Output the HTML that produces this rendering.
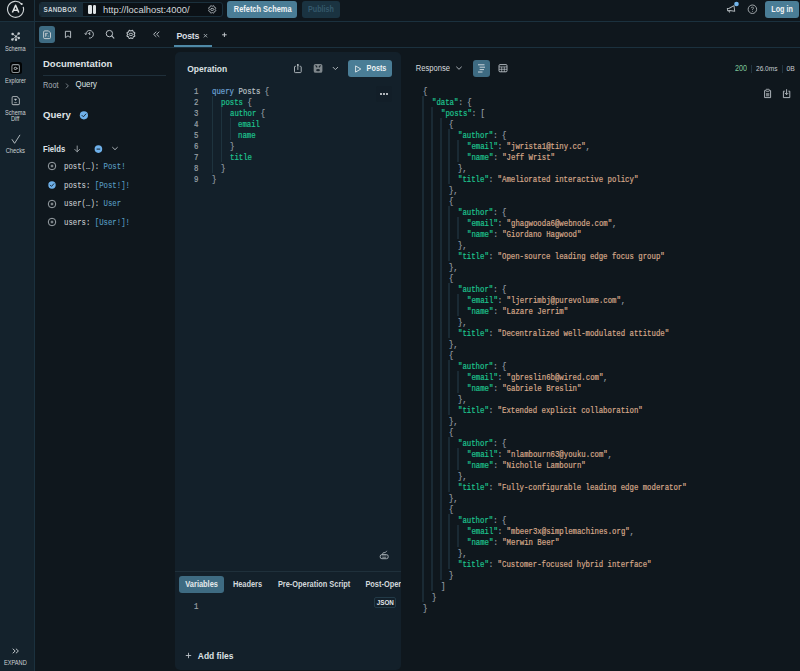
<!DOCTYPE html>
<html><head><meta charset="utf-8"><title>Apollo Sandbox</title>
<style>html,body{margin:0;padding:0;width:800px;height:671px;overflow:hidden;background:#0f171d;font-family:"Liberation Sans",sans-serif}</style>
</head><body>
<div style="position:absolute;left:0px;top:0px;width:800px;height:671px;background:#0f171d;"></div><div style="position:absolute;left:0px;top:22px;width:34px;height:649px;background:#14222c;"></div><div style="position:absolute;left:34px;top:0px;width:1px;height:671px;background:#1b313e;"></div><div style="position:absolute;left:0px;top:21px;width:800px;height:1px;background:#1b313e;"></div><div style="position:absolute;left:35px;top:47px;width:765px;height:1px;background:#1b313e;"></div><svg style="position:absolute;left:6px;top:0px;" width="20" height="20" viewBox="0 0 20 20" fill="none"><path d="M17.28 7.23 A8 8 0 1 1 15.59 4.05" stroke="#cdd2d5" stroke-width="1.15" stroke-linecap="round"/><circle cx="15.7" cy="3.95" r="1.05" fill="#d5d9dc"/><path d="M6.4 12.5 L9.6 5.3 L12.8 12.5 M7.6 10.2 L11.6 10.2" stroke="#e0e3e5" stroke-width="1.55" stroke-linejoin="round"/></svg><div style="position:absolute;left:38.8px;top:2px;width:182.5px;height:12.8px;border:1px solid #1b303c;border-radius:3px;background:#0b1116;overflow:hidden"><div style="position:absolute;left:0;top:0;width:42.8px;height:12.8px;background:#1a2c38"></div></div><div style="position:absolute;left:43.5px;top:10.02px;font-family:'Liberation Sans',sans-serif;font-size:6.3px;font-weight:bold;line-height:0;color:#c9d0d4;white-space:pre;letter-spacing:0.25px;transform:scaleY(1.14);transform-origin:0 2.18px">SANDBOX</div><div style="position:absolute;left:87.6px;top:5.2px;width:4px;height:8.4px;background:#dfe3e5;border-radius:1.2px"></div><div style="position:absolute;left:92.6px;top:5.2px;width:3.9px;height:8.4px;background:#dfe3e5;border-radius:1.2px"></div><div style="position:absolute;left:103px;top:9.75px;font-family:'Liberation Sans',sans-serif;font-size:9.38px;font-weight:normal;line-height:0;color:#d3d8db;white-space:pre;">http://localhost:4000/</div><svg style="position:absolute;left:200px;top:0px;" width="24" height="20" viewBox="0 0 24 20" fill="none"><path d="M15.18 9.40 L15.23 9.61 L15.36 9.83 L15.53 10.09 L15.69 10.37 L15.76 10.66 L15.73 10.92 L15.58 11.13 L15.33 11.28 L15.03 11.36 L14.73 11.42 L14.48 11.48 L14.31 11.59 L14.20 11.77 L14.14 12.03 L14.09 12.34 L14.00 12.65 L13.86 12.91 L13.66 13.07 L13.41 13.11 L13.13 13.03 L12.86 12.87 L12.62 12.69 L12.40 12.55 L12.20 12.50 L12.00 12.55 L11.78 12.69 L11.54 12.87 L11.27 13.03 L10.99 13.11 L10.74 13.07 L10.54 12.91 L10.39 12.65 L10.31 12.34 L10.26 12.03 L10.20 11.77 L10.09 11.59 L9.92 11.48 L9.67 11.42 L9.37 11.36 L9.07 11.28 L8.82 11.13 L8.67 10.92 L8.64 10.66 L8.71 10.37 L8.87 10.09 L9.04 9.83 L9.17 9.61 L9.22 9.40 L9.17 9.19 L9.04 8.97 L8.87 8.71 L8.71 8.43 L8.64 8.14 L8.67 7.88 L8.82 7.67 L9.07 7.52 L9.37 7.44 L9.67 7.38 L9.92 7.32 L10.09 7.21 L10.20 7.03 L10.26 6.77 L10.31 6.46 L10.39 6.15 L10.54 5.89 L10.74 5.73 L10.99 5.69 L11.27 5.77 L11.54 5.93 L11.78 6.11 L12.00 6.25 L12.20 6.30 L12.40 6.25 L12.62 6.11 L12.86 5.93 L13.13 5.77 L13.41 5.69 L13.66 5.73 L13.86 5.89 L14.00 6.15 L14.09 6.46 L14.14 6.77 L14.20 7.03 L14.31 7.21 L14.48 7.32 L14.73 7.38 L15.03 7.44 L15.33 7.52 L15.58 7.67 L15.73 7.88 L15.76 8.14 L15.69 8.43 L15.53 8.71 L15.36 8.97 L15.23 9.19 Z" stroke="#b4bbc0" stroke-width="0.95" stroke-linejoin="round"/><ellipse cx="12.2" cy="9.4" rx="1.6" ry="1.05" stroke="#b4bbc0" stroke-width="0.9"/></svg><div style="position:absolute;left:227.3px;top:1px;width:70.2px;height:16.5px;background:#4a7d96;border-radius:3px"></div><div style="position:absolute;left:233.8px;top:9.73px;font-family:'Liberation Sans',sans-serif;font-size:7.43px;font-weight:bold;line-height:0;color:#f2f4f5;white-space:pre;;transform:scaleY(1.14);transform-origin:0 2.57px">Refetch Schema</div><div style="position:absolute;left:302px;top:1px;width:38.2px;height:16.5px;background:#1a3341;border-radius:3px"></div><div style="position:absolute;left:308px;top:9.81px;font-family:'Liberation Sans',sans-serif;font-size:7.2px;font-weight:bold;line-height:0;color:#34586b;white-space:pre;;transform:scaleY(1.14);transform-origin:0 2.49px">Publish</div><svg style="position:absolute;left:722px;top:0px;" width="20" height="18" viewBox="0 0 20 18" fill="none"><g transform="rotate(-8 9 9)"><path d="M5.4 8 L7.4 8 L12.4 6.1 L12.4 11.7 L7.4 10.3 L5.4 10.3 Z" stroke="#aeb5b9" stroke-width="0.95" stroke-linejoin="round"/><path d="M6.5 10.3 L7.3 12.2" stroke="#aeb5b9" stroke-width="0.95"/></g><circle cx="14.5" cy="4.05" r="2.3" fill="#74b6ec"/></svg><svg style="position:absolute;left:746px;top:3px;" width="13" height="13" viewBox="0 0 13 13" fill="none"><circle cx="6.4" cy="6.26" r="4.25" stroke="#a3aaae" stroke-width="0.95"/><path d="M5.2 5.2 Q5.3 4.1 6.4 4.1 Q7.5 4.1 7.5 5.1 Q7.5 5.9 6.5 6.3 L6.5 7" stroke="#a3aaae" stroke-width="0.85" fill="none"/><circle cx="6.5" cy="8.3" r="0.5" fill="#a3aaae"/></svg><div style="position:absolute;left:765px;top:1.1px;width:34px;height:16.7px;background:#4a7d96;border-radius:3px"></div><div style="position:absolute;left:771.3px;top:9.71px;font-family:'Liberation Sans',sans-serif;font-size:7.2px;font-weight:bold;line-height:0;color:#f2f4f5;white-space:pre;;transform:scaleY(1.14);transform-origin:0 2.49px">Log in</div><svg style="position:absolute;left:0px;top:22px;" width="34" height="100" viewBox="0 0 34 100" fill="none"><path d="M12.6 34 L16 36.4 L18.7 33.5 M12.4 39.5 L16 36.4 L16 39.8 M16 36.4 L18.8 38" transform="translate(0,-22)" stroke="#a9b1b6" stroke-width="0.9"/><g transform="translate(0,-22)" fill="#c1c8cc"><circle cx="12.6" cy="34" r="1.25"/><circle cx="18.7" cy="33.5" r="1.25"/><circle cx="12.4" cy="39.5" r="1.25"/><circle cx="16" cy="39.8" r="1.2"/><circle cx="18.8" cy="38" r="1.2"/><circle cx="15.9" cy="36.4" r="0.9"/></g></svg><div style="position:absolute;left:5px;top:48.65px;font-family:'Liberation Sans',sans-serif;font-size:5.62px;font-weight:normal;line-height:0;color:#cdd3d6;white-space:pre;;transform:scaleY(1.14);transform-origin:0 1.95px">Schema</div><div style="position:absolute;left:9.75px;top:62.25px;width:12.25px;height:11.75px;background:#020405;border-radius:2.5px"></div><svg style="position:absolute;left:0px;top:60px;" width="34" height="20" viewBox="0 0 34 20" fill="none"><rect x="11.9" y="4.6" width="7.5" height="7.9" rx="1.6" stroke="#8d9498" stroke-width="1.05"/><circle cx="15.3" cy="8.4" r="1.15" stroke="#b8bec2" stroke-width="0.9"/><path d="M16.5 7.6 L17.6 8.4 L16.5 9.2" stroke="#b8bec2" stroke-width="0.8" stroke-linejoin="round"/></svg><div style="position:absolute;left:5px;top:81.06px;font-family:'Liberation Sans',sans-serif;font-size:5.61px;font-weight:normal;line-height:0;color:#cdd3d6;white-space:pre;;transform:scaleY(1.14);transform-origin:0 1.94px">Explorer</div><svg style="position:absolute;left:0px;top:93px;" width="34" height="14" viewBox="0 0 34 14" fill="none"><path d="M13.3 3.5 L17 3.5 L19.4 5.9 L19.4 10.4 Q19.4 11.6 18.2 11.6 L13.3 11.6 Q12.1 11.6 12.1 10.4 L12.1 4.7 Q12.1 3.5 13.3 3.5 Z" stroke="#9aa1a5" stroke-width="1.05"/><path d="M14.4 6 L16.6 6 L15.5 7.6 Z" fill="#c6ccd0" stroke="#c6ccd0" stroke-width="0.5" stroke-linejoin="round"/><path d="M14.2 9.6 L16.8 9.6" stroke="#8e969a" stroke-width="0.9"/></svg><div style="position:absolute;left:5px;top:112.55px;font-family:'Liberation Sans',sans-serif;font-size:5.62px;font-weight:normal;line-height:0;color:#cdd3d6;white-space:pre;;transform:scaleY(1.14);transform-origin:0 1.95px">Schema</div><div style="position:absolute;left:11px;top:118.85px;font-family:'Liberation Sans',sans-serif;font-size:5.62px;font-weight:normal;line-height:0;color:#cdd3d6;white-space:pre;;transform:scaleY(1.14);transform-origin:0 1.95px">Diff</div><svg style="position:absolute;left:10px;top:133px;" width="12" height="12" viewBox="0 0 12 12" fill="none"><path d="M2.1 6.6 L4.6 10.3 L9.8 2.2" stroke="#c0c7cb" stroke-width="0.9" stroke-linecap="round" stroke-linejoin="round"/></svg><div style="position:absolute;left:5.7px;top:150.99px;font-family:'Liberation Sans',sans-serif;font-size:5.79px;font-weight:normal;line-height:0;color:#cdd3d6;white-space:pre;;transform:scaleY(1.14);transform-origin:0 2.01px">Checks</div><svg style="position:absolute;left:11px;top:646px;" width="10" height="10" viewBox="0 0 10 10" fill="none"><path d="M2 3 L4.2 5 L2 7 M5.2 3 L7.4 5 L5.2 7" stroke="#cdd3d6" stroke-width="0.9" stroke-linecap="round" stroke-linejoin="round"/></svg><div style="position:absolute;left:3.9px;top:663.04px;font-family:'Liberation Sans',sans-serif;font-size:5.67px;font-weight:normal;line-height:0;color:#cdd3d6;white-space:pre;;transform:scaleY(1.14);transform-origin:0 1.96px">EXPAND</div><div style="position:absolute;left:38.8px;top:26px;width:16.7px;height:16.8px;background:#3e6b82;border-radius:3px"></div><svg style="position:absolute;left:0px;top:22px;" width="180" height="26" viewBox="0 0 180 26" fill="none"><g transform="translate(0,-22)"><path d="M44.8 30.9 L48.5 30.9 L50.5 32.9 L50.5 37.4 Q50.5 38.6 49.3 38.6 L44.8 38.6 Q43.6 38.6 43.6 37.4 L43.6 32.1 Q43.6 30.9 44.8 30.9 Z" stroke="#c9d0d4" stroke-width="0.95" stroke-linejoin="round"/><path d="M45.6 33.4 L47.9 33.4 M45.6 35 L47 35 M45.6 33 L45.6 36.8" stroke="#b9c2c7" stroke-width="0.9"/><rect x="47.6" y="35.6" width="1.6" height="1.3" fill="#6f93a6"/><path d="M65.4 31.3 L70.6 31.3 L70.6 37.7 L68 35.8 L65.4 37.7 Z" stroke="#bcc3c8" stroke-width="0.95" stroke-linejoin="round"/><path d="M85.8 34.3 A3.8 3.8 0 1 1 88.94 38.04" stroke="#bcc3c8" stroke-width="0.95"/><path d="M84.7 33.4 L85.8 34.7 L86.9 33.4" stroke="#bcc3c8" stroke-width="0.9" stroke-linejoin="round"/><path d="M89.7 34.5 L88.3 33.1 M89.7 34.5 L89.7 32.4" stroke="#bcc3c8" stroke-width="0.9" stroke-linecap="round"/><circle cx="109.4" cy="33.6" r="3.2" stroke="#bcc3c8" stroke-width="1"/><path d="M111.7 35.9 L113.9 38.1" stroke="#bcc3c8" stroke-width="1.05" stroke-linecap="round"/><path d="M134.20 34.40 L134.25 34.63 L134.39 34.88 L134.58 35.16 L134.74 35.47 L134.82 35.78 L134.78 36.07 L134.61 36.30 L134.34 36.47 L134.02 36.57 L133.70 36.63 L133.43 36.70 L133.23 36.83 L133.12 37.03 L133.05 37.31 L132.98 37.64 L132.89 37.98 L132.73 38.26 L132.51 38.44 L132.23 38.48 L131.93 38.39 L131.63 38.23 L131.36 38.03 L131.12 37.89 L130.90 37.83 L130.68 37.89 L130.44 38.03 L130.17 38.23 L129.87 38.39 L129.57 38.48 L129.29 38.44 L129.07 38.26 L128.91 37.98 L128.82 37.64 L128.75 37.31 L128.68 37.03 L128.57 36.83 L128.37 36.70 L128.10 36.63 L127.78 36.57 L127.46 36.47 L127.19 36.30 L127.02 36.07 L126.98 35.78 L127.06 35.47 L127.22 35.16 L127.41 34.88 L127.55 34.63 L127.60 34.40 L127.55 34.17 L127.41 33.92 L127.22 33.64 L127.06 33.33 L126.98 33.02 L127.02 32.73 L127.19 32.50 L127.46 32.33 L127.78 32.23 L128.10 32.17 L128.37 32.10 L128.57 31.97 L128.68 31.77 L128.75 31.49 L128.82 31.16 L128.91 30.82 L129.07 30.54 L129.29 30.36 L129.57 30.32 L129.87 30.41 L130.17 30.57 L130.44 30.77 L130.68 30.91 L130.90 30.97 L131.12 30.91 L131.36 30.77 L131.63 30.57 L131.93 30.41 L132.23 30.32 L132.51 30.36 L132.73 30.54 L132.89 30.82 L132.98 31.16 L133.05 31.49 L133.12 31.77 L133.23 31.97 L133.43 32.10 L133.70 32.17 L134.02 32.23 L134.34 32.33 L134.61 32.50 L134.78 32.73 L134.82 33.02 L134.74 33.33 L134.58 33.64 L134.39 33.92 L134.25 34.17 Z" stroke="#bcc3c8" stroke-width="1.05" stroke-linejoin="round"/><ellipse cx="130.9" cy="34.4" rx="1.9" ry="1.15" stroke="#bcc3c8" stroke-width="0.95"/></g></svg><svg style="position:absolute;left:151px;top:30px;" width="10" height="10" viewBox="0 0 10 10" fill="none"><path d="M5 2 L2.6 4.3 L5 6.6 M8 2 L5.6 4.3 L8 6.6" stroke="#bcc3c8" stroke-width="0.9" stroke-linecap="round" stroke-linejoin="round"/></svg><div style="position:absolute;left:176.4px;top:36.25px;font-family:'Liberation Sans',sans-serif;font-size:8.8px;font-weight:bold;line-height:0;color:#d8dde0;white-space:pre;letter-spacing:-0.25px">Posts</div><svg style="position:absolute;left:202px;top:32px;" width="7" height="7" viewBox="0 0 7 7" fill="none"><path d="M1.8 2 L5.2 5.4 M5.2 2 L1.8 5.4" stroke="#b4bcc1" stroke-width="0.8"/></svg><div style="position:absolute;left:174.4px;top:45px;width:37.5px;height:2px;background:#4f89a6;"></div><svg style="position:absolute;left:219px;top:30px;" width="10" height="10" viewBox="0 0 10 10" fill="none"><path d="M5.4 2.6 L5.4 7 M3.1 4.8 L7.7 4.8" stroke="#c8ced2" stroke-width="0.95"/></svg><div style="position:absolute;left:43px;top:63.90px;font-family:'Liberation Sans',sans-serif;font-size:9.52px;font-weight:bold;line-height:0;color:#dfe3e6;white-space:pre;">Documentation</div><div style="position:absolute;left:43px;top:74.5px;width:123px;height:1px;background:#1f2f3a;"></div><div style="position:absolute;left:43px;top:85.64px;font-family:'Liberation Sans',sans-serif;font-size:7.39px;font-weight:normal;line-height:0;color:#a6afb6;white-space:pre;;transform:scaleY(1.14);transform-origin:0 2.56px">Root</div><svg style="position:absolute;left:64px;top:82px;" width="6" height="8" viewBox="0 0 6 8" fill="none"><path d="M2 1.5 L4.3 3.9 L2 6.3" stroke="#8f989f" stroke-width="0.8"/></svg><div style="position:absolute;left:75.6px;top:85.48px;font-family:'Liberation Sans',sans-serif;font-size:7.86px;font-weight:normal;line-height:0;color:#dfe3e6;white-space:pre;;transform:scaleY(1.14);transform-origin:0 2.72px">Query</div><div style="position:absolute;left:43px;top:115.07px;font-family:'Liberation Sans',sans-serif;font-size:9.6px;font-weight:bold;line-height:0;color:#dfe3e6;white-space:pre;">Query</div><svg style="position:absolute;left:79px;top:111px;" width="10" height="10" viewBox="0 0 10 10" fill="none"><circle cx="4.9" cy="4.3" r="4.1" fill="#6fb1ea"/><path d="M3 4.4 L4.4 5.8 L6.9 3" stroke="#15212b" stroke-width="0.9" stroke-linecap="round" stroke-linejoin="round"/></svg><div style="position:absolute;left:43px;top:149.54px;font-family:'Liberation Sans',sans-serif;font-size:7.68px;font-weight:bold;line-height:0;color:#dfe3e6;white-space:pre;;transform:scaleY(1.14);transform-origin:0 2.66px">Fields</div><svg style="position:absolute;left:72px;top:143px;" width="10" height="10" viewBox="0 0 10 10" fill="none"><path d="M5.2 3 L5.2 8.8 M2.8 6.4 L5.2 8.8 L7.6 6.4" stroke="#a9b0b5" stroke-width="0.85" stroke-linecap="round" stroke-linejoin="round"/></svg><svg style="position:absolute;left:93px;top:143.5px;" width="11" height="11" viewBox="0 0 11 11" fill="none"><circle cx="5.4" cy="5.1" r="3.8" fill="#6fb1ea"/><path d="M3.6 5.1 L7.2 5.1" stroke="#15212b" stroke-width="1"/></svg><svg style="position:absolute;left:110px;top:144px;" width="10" height="10" viewBox="0 0 10 10" fill="none"><path d="M2.6 3.4 L5 5.7 L7.4 3.4" stroke="#bcc3c8" stroke-width="0.9" stroke-linecap="round" stroke-linejoin="round"/></svg><svg style="position:absolute;left:46.8px;top:161.4px;" width="10" height="10" viewBox="0 0 10 10" fill="none"><circle cx="5" cy="5" r="3.75" stroke="#b3babf" stroke-width="0.85"/><path d="M5 3.6 L5 6.4 M3.6 5 L6.4 5" stroke="#c2c8cc" stroke-width="0.75"/></svg><div style="position:absolute;left:63.5px;top:167.01px;font-family:'Liberation Mono',monospace;font-size:8.6px;line-height:0;color:#c9ced2;white-space:pre;transform:scaleX(0.8526);transform-origin:0 0;-webkit-text-stroke:0.1px currentColor">post(…): <span style="color:#5a9fc4">Post!</span></div><svg style="position:absolute;left:46.8px;top:180.07px;" width="10" height="10" viewBox="0 0 10 10" fill="none"><circle cx="5" cy="5" r="3.7" fill="#6fb1ea"/><path d="M3.2 5.1 L4.5 6.4 L6.8 3.8" stroke="#15212b" stroke-width="0.9" stroke-linecap="round" stroke-linejoin="round"/></svg><div style="position:absolute;left:63.5px;top:185.68px;font-family:'Liberation Mono',monospace;font-size:8.6px;line-height:0;color:#c9ced2;white-space:pre;transform:scaleX(0.8526);transform-origin:0 0;-webkit-text-stroke:0.1px currentColor">posts: <span style="color:#5a9fc4">[Post!]!</span></div><svg style="position:absolute;left:46.8px;top:198.74px;" width="10" height="10" viewBox="0 0 10 10" fill="none"><circle cx="5" cy="5" r="3.75" stroke="#b3babf" stroke-width="0.85"/><path d="M5 3.6 L5 6.4 M3.6 5 L6.4 5" stroke="#c2c8cc" stroke-width="0.75"/></svg><div style="position:absolute;left:63.5px;top:204.35px;font-family:'Liberation Mono',monospace;font-size:8.6px;line-height:0;color:#c9ced2;white-space:pre;transform:scaleX(0.8526);transform-origin:0 0;-webkit-text-stroke:0.1px currentColor">user(…): <span style="color:#5a9fc4">User</span></div><svg style="position:absolute;left:46.8px;top:217.41000000000003px;" width="10" height="10" viewBox="0 0 10 10" fill="none"><circle cx="5" cy="5" r="3.75" stroke="#b3babf" stroke-width="0.85"/><path d="M5 3.6 L5 6.4 M3.6 5 L6.4 5" stroke="#c2c8cc" stroke-width="0.75"/></svg><div style="position:absolute;left:63.5px;top:223.02px;font-family:'Liberation Mono',monospace;font-size:8.6px;line-height:0;color:#c9ced2;white-space:pre;transform:scaleX(0.8526);transform-origin:0 0;-webkit-text-stroke:0.1px currentColor">users: <span style="color:#5a9fc4">[User!]!</span></div><div style="position:absolute;left:174.5px;top:51.7px;width:226.3px;height:618.3px;background:#13202a;border-radius:5px"></div><div style="position:absolute;left:187.2px;top:69.07px;font-family:'Liberation Sans',sans-serif;font-size:8.47px;font-weight:bold;line-height:0;color:#dce1e4;white-space:pre;">Operation</div><svg style="position:absolute;left:280px;top:56px;" width="70" height="22" viewBox="0 0 70 22" fill="none"><path d="M15.6 10.3 L15.2 10.3 Q14.5 10.3 14.5 11 L14.5 15.8 Q14.5 16.6 15.3 16.6 L20.4 16.6 Q21.2 16.6 21.2 15.8 L21.2 11 Q21.2 10.3 20.5 10.3 L20.1 10.3" stroke="#a9b0b5" stroke-width="1" stroke-linecap="round"/><path d="M17.85 13.9 L17.85 9.4" stroke="#a9b0b5" stroke-width="1"/><circle cx="17.85" cy="8.9" r="0.95" fill="#c3c9cd"/><rect x="33.7" y="7.9" width="8.7" height="8.9" rx="1.9" fill="#7f878c"/><path d="M35.6 9.3 L37.2 11.4 M40.5 9.3 L38.9 11.4" stroke="#1a252d" stroke-width="1.1"/><ellipse cx="38.05" cy="14.2" rx="1.9" ry="1.1" fill="#1a252d"/><path d="M53.1 11.3 L55.4 13.6 L57.7 11.3" stroke="#b1b8bd" stroke-width="0.95" stroke-linecap="round" stroke-linejoin="round"/></svg><div style="position:absolute;left:348px;top:60px;width:44.4px;height:16.8px;background:#4a7d96;border-radius:3px"></div><svg style="position:absolute;left:353px;top:64px;" width="10" height="10" viewBox="0 0 10 10" fill="none"><path d="M2.6 1.9 L7.8 5 L2.6 8.1 Z" stroke="#e8ecee" stroke-width="0.9" stroke-linejoin="round"/></svg><div style="position:absolute;left:366.6px;top:69.18px;font-family:'Liberation Sans',sans-serif;font-size:7.27px;font-weight:bold;line-height:0;color:#f0f3f4;white-space:pre;;transform:scaleY(1.14);transform-origin:0 2.52px">Posts</div><div style="position:absolute;left:376px;top:85.8px;width:16px;height:16px;background:#121e28;border-radius:2px"></div><div style="position:absolute;left:380.0px;top:92.5px;width:2.2px;height:2.2px;background:#e6e9eb;border-radius:50%"></div><div style="position:absolute;left:382.9px;top:92.5px;width:2.2px;height:2.2px;background:#e6e9eb;border-radius:50%"></div><div style="position:absolute;left:385.79999999999995px;top:92.5px;width:2.2px;height:2.2px;background:#e6e9eb;border-radius:50%"></div><div style="position:absolute;left:212px;top:96.48px;width:1px;height:76.86px;background:#1e333e;"></div><div style="position:absolute;left:221px;top:107.46000000000001px;width:1px;height:54.900000000000006px;background:#1e333e;"></div><div style="position:absolute;left:230px;top:118.44px;width:1px;height:21.96px;background:#1e333e;"></div><div style="position:absolute;left:194.0px;top:91.71px;font-family:'Liberation Mono',monospace;font-size:8.6px;line-height:0;color:#9aa3a9;white-space:pre;transform:scaleX(0.8526);transform-origin:0 0;-webkit-text-stroke:0.2px currentColor">1</div><div style="position:absolute;left:212.0px;top:91.71px;font-family:'Liberation Mono',monospace;font-size:8.6px;line-height:0;color:#979fa5;white-space:pre;transform:scaleX(0.8526);transform-origin:0 0;-webkit-text-stroke:0.2px currentColor"><span style="color:#6ea3d6">query</span> <span style="color:#b9c0c5">Posts</span> <span style="color:#979fa5">{</span></div><div style="position:absolute;left:194.0px;top:102.69px;font-family:'Liberation Mono',monospace;font-size:8.6px;line-height:0;color:#9aa3a9;white-space:pre;transform:scaleX(0.8526);transform-origin:0 0;-webkit-text-stroke:0.2px currentColor">2</div><div style="position:absolute;left:220.8px;top:102.69px;font-family:'Liberation Mono',monospace;font-size:8.6px;line-height:0;color:#979fa5;white-space:pre;transform:scaleX(0.8526);transform-origin:0 0;-webkit-text-stroke:0.2px currentColor"><span style="color:#1ec48f">posts</span> <span style="color:#979fa5">{</span></div><div style="position:absolute;left:194.0px;top:113.67px;font-family:'Liberation Mono',monospace;font-size:8.6px;line-height:0;color:#9aa3a9;white-space:pre;transform:scaleX(0.8526);transform-origin:0 0;-webkit-text-stroke:0.2px currentColor">3</div><div style="position:absolute;left:229.6px;top:113.67px;font-family:'Liberation Mono',monospace;font-size:8.6px;line-height:0;color:#979fa5;white-space:pre;transform:scaleX(0.8526);transform-origin:0 0;-webkit-text-stroke:0.2px currentColor"><span style="color:#1ec48f">author</span> <span style="color:#979fa5">{</span></div><div style="position:absolute;left:194.0px;top:124.65px;font-family:'Liberation Mono',monospace;font-size:8.6px;line-height:0;color:#9aa3a9;white-space:pre;transform:scaleX(0.8526);transform-origin:0 0;-webkit-text-stroke:0.2px currentColor">4</div><div style="position:absolute;left:238.4px;top:124.65px;font-family:'Liberation Mono',monospace;font-size:8.6px;line-height:0;color:#979fa5;white-space:pre;transform:scaleX(0.8526);transform-origin:0 0;-webkit-text-stroke:0.2px currentColor"><span style="color:#1ec48f">email</span></div><div style="position:absolute;left:194.0px;top:135.63px;font-family:'Liberation Mono',monospace;font-size:8.6px;line-height:0;color:#9aa3a9;white-space:pre;transform:scaleX(0.8526);transform-origin:0 0;-webkit-text-stroke:0.2px currentColor">5</div><div style="position:absolute;left:238.4px;top:135.63px;font-family:'Liberation Mono',monospace;font-size:8.6px;line-height:0;color:#979fa5;white-space:pre;transform:scaleX(0.8526);transform-origin:0 0;-webkit-text-stroke:0.2px currentColor"><span style="color:#1ec48f">name</span></div><div style="position:absolute;left:194.0px;top:146.61px;font-family:'Liberation Mono',monospace;font-size:8.6px;line-height:0;color:#9aa3a9;white-space:pre;transform:scaleX(0.8526);transform-origin:0 0;-webkit-text-stroke:0.2px currentColor">6</div><div style="position:absolute;left:229.6px;top:146.61px;font-family:'Liberation Mono',monospace;font-size:8.6px;line-height:0;color:#979fa5;white-space:pre;transform:scaleX(0.8526);transform-origin:0 0;-webkit-text-stroke:0.2px currentColor"><span style="color:#979fa5">}</span></div><div style="position:absolute;left:194.0px;top:157.59px;font-family:'Liberation Mono',monospace;font-size:8.6px;line-height:0;color:#9aa3a9;white-space:pre;transform:scaleX(0.8526);transform-origin:0 0;-webkit-text-stroke:0.2px currentColor">7</div><div style="position:absolute;left:229.6px;top:157.59px;font-family:'Liberation Mono',monospace;font-size:8.6px;line-height:0;color:#979fa5;white-space:pre;transform:scaleX(0.8526);transform-origin:0 0;-webkit-text-stroke:0.2px currentColor"><span style="color:#1ec48f">title</span></div><div style="position:absolute;left:194.0px;top:168.57px;font-family:'Liberation Mono',monospace;font-size:8.6px;line-height:0;color:#9aa3a9;white-space:pre;transform:scaleX(0.8526);transform-origin:0 0;-webkit-text-stroke:0.2px currentColor">8</div><div style="position:absolute;left:220.8px;top:168.57px;font-family:'Liberation Mono',monospace;font-size:8.6px;line-height:0;color:#979fa5;white-space:pre;transform:scaleX(0.8526);transform-origin:0 0;-webkit-text-stroke:0.2px currentColor"><span style="color:#979fa5">}</span></div><div style="position:absolute;left:194.0px;top:179.55px;font-family:'Liberation Mono',monospace;font-size:8.6px;line-height:0;color:#9aa3a9;white-space:pre;transform:scaleX(0.8526);transform-origin:0 0;-webkit-text-stroke:0.2px currentColor">9</div><div style="position:absolute;left:212.0px;top:179.55px;font-family:'Liberation Mono',monospace;font-size:8.6px;line-height:0;color:#979fa5;white-space:pre;transform:scaleX(0.8526);transform-origin:0 0;-webkit-text-stroke:0.2px currentColor"><span style="color:#979fa5">}</span></div><svg style="position:absolute;left:370px;top:545px;" width="26" height="20" viewBox="0 0 26 20" fill="none"><rect x="10.2" y="9.6" width="8" height="4.1" rx="1.7" stroke="#aab1b6" stroke-width="0.95"/><path d="M11.8 10.9 L16.6 10.9 M12.3 12.5 L16.1 12.5" stroke="#7d858a" stroke-width="0.8"/><path d="M12.4 9.4 L13.1 7.8 L15.4 7.5 L16.6 6.1" stroke="#aab1b6" stroke-width="0.85" stroke-linecap="round" stroke-linejoin="round"/></svg><div style="position:absolute;left:175px;top:571px;width:226px;height:1px;background:#1f303b;"></div><div style="position:absolute;left:178.8px;top:576px;width:45.2px;height:16.8px;background:#3e6b82;border-radius:3px"></div><div style="position:absolute;left:185.3px;top:584.82px;font-family:'Liberation Sans',sans-serif;font-size:7.45px;font-weight:bold;line-height:0;color:#e6eaec;white-space:pre;;transform:scaleY(1.14);transform-origin:0 2.58px">Variables</div><div style="position:absolute;left:232.9px;top:584.83px;font-family:'Liberation Sans',sans-serif;font-size:7.42px;font-weight:bold;line-height:0;color:#d3d9dc;white-space:pre;;transform:scaleY(1.14);transform-origin:0 2.57px">Headers</div><div style="position:absolute;left:277.9px;top:584.83px;font-family:'Liberation Sans',sans-serif;font-size:7.42px;font-weight:bold;line-height:0;color:#d3d9dc;white-space:pre;;transform:scaleY(1.14);transform-origin:0 2.57px">Pre-Operation Script</div><div style="position:absolute;left:365.4px;top:578px;width:35.3px;height:14px;overflow:hidden"><div style="position:absolute;left:0px;top:6.83px;font-family:'Liberation Sans',sans-serif;font-size:7.42px;font-weight:bold;line-height:0;color:#d3d9dc;white-space:pre;;transform:scaleY(1.14);transform-origin:0 2.57px">Post-Operation Script</div></div><div style="position:absolute;left:374.1px;top:597.1px;width:20.4px;height:8.5px;border:1px solid #223a47;border-radius:2px"></div><div style="position:absolute;left:376.75px;top:603.12px;font-family:'Liberation Sans',sans-serif;font-size:6.28px;font-weight:bold;line-height:0;color:#e2e6e8;white-space:pre;;transform:scaleY(1.14);transform-origin:0 2.18px">JSON</div><div style="position:absolute;left:194.4px;top:607.21px;font-family:'Liberation Mono',monospace;font-size:8.6px;line-height:0;color:#9aa3a9;white-space:pre;transform:scaleX(0.8526);transform-origin:0 0;-webkit-text-stroke:0.2px currentColor">1</div><svg style="position:absolute;left:184px;top:651px;" width="9" height="9" viewBox="0 0 9 9" fill="none"><path d="M4.5 1.8 L4.5 7.2 M1.8 4.5 L7.2 4.5" stroke="#b9c0c5" stroke-width="0.9"/></svg><div style="position:absolute;left:197.8px;top:656.08px;font-family:'Liberation Sans',sans-serif;font-size:8.43px;font-weight:bold;line-height:0;color:#dfe3e6;white-space:pre;">Add files</div><div style="position:absolute;left:415.8px;top:68.97px;font-family:'Liberation Sans',sans-serif;font-size:7.59px;font-weight:normal;line-height:0;color:#d6dbde;white-space:pre;;transform:scaleY(1.14);transform-origin:0 2.63px">Response</div><svg style="position:absolute;left:454px;top:64px;" width="10" height="8" viewBox="0 0 10 8" fill="none"><path d="M2.6 3 L5 5.3 L7.4 3" stroke="#bcc3c8" stroke-width="0.9" stroke-linecap="round" stroke-linejoin="round"/></svg><div style="position:absolute;left:473.4px;top:59.9px;width:17.1px;height:17px;background:#3e6b82;border-radius:3px"></div><svg style="position:absolute;left:473.4px;top:59.9px;" width="17" height="17" viewBox="0 0 17 17" fill="none"><path d="M5 4.8 L11.5 4.8 M6.6 7.2 L12 7.2 M6.6 9.6 L11 9.6 M5 12 L9.5 12" stroke="#d9e0e4" stroke-width="0.9"/></svg><svg style="position:absolute;left:497px;top:62px;" width="12" height="12" viewBox="0 0 12 12" fill="none"><rect x="2" y="2.6" width="8" height="7.2" rx="1" stroke="#bcc3c8" stroke-width="0.9"/><path d="M2 4.9 L10 4.9 M2 7.3 L10 7.3 M4.7 4.9 L4.7 9.8 M7.3 4.9 L7.3 9.8" stroke="#bcc3c8" stroke-width="0.7"/></svg><div style="position:absolute;left:735px;top:68.51px;font-family:'Liberation Sans',sans-serif;font-size:7.19px;font-weight:normal;line-height:0;color:#7ec49b;white-space:pre;;transform:scaleY(1.14);transform-origin:0 2.49px">200</div><div style="position:absolute;left:751.3px;top:64.5px;width:1px;height:8px;background:#223440;"></div><div style="position:absolute;left:756px;top:68.73px;font-family:'Liberation Sans',sans-serif;font-size:6.56px;font-weight:normal;line-height:0;color:#c5cbcf;white-space:pre;;transform:scaleY(1.14);transform-origin:0 2.27px">26.0ms</div><div style="position:absolute;left:782.3px;top:64.5px;width:1px;height:8px;background:#223440;"></div><div style="position:absolute;left:786.5px;top:68.65px;font-family:'Liberation Sans',sans-serif;font-size:6.79px;font-weight:normal;line-height:0;color:#c5cbcf;white-space:pre;;transform:scaleY(1.14);transform-origin:0 2.35px">0B</div><svg style="position:absolute;left:762px;top:88px;" width="11" height="11" viewBox="0 0 11 11" fill="none"><path d="M3.6 2.6 L2.6 2.6 L2.6 9.6 L8.6 9.6 L8.6 2.6 L7.6 2.6" stroke="#bcc3c8" stroke-width="0.9" stroke-linejoin="round"/><rect x="3.9" y="1.3" width="3.4" height="2" rx="0.5" stroke="#bcc3c8" stroke-width="0.8"/><rect x="4" y="5" width="3.3" height="3.4" fill="#bcc3c8" opacity="0.6"/></svg><svg style="position:absolute;left:781px;top:88px;" width="11" height="11" viewBox="0 0 11 11" fill="none"><path d="M3.8 3.2 L2.4 3.2 L2.4 9.6 L8.8 9.6 L8.8 3.2 L7.4 3.2" stroke="#bcc3c8" stroke-width="0.9" stroke-linejoin="round"/><path d="M5.6 1.2 L5.6 6.6 M3.8 4.9 L5.6 6.7 L7.4 4.9" stroke="#bcc3c8" stroke-width="0.9" stroke-linejoin="round"/></svg><div style="position:absolute;left:422px;top:96px;width:2px;height:506px;background:#1a2a34;"></div><div style="position:absolute;left:431px;top:107px;width:2px;height:484px;background:#1a2a34;"></div><div style="position:absolute;left:440px;top:118px;width:2px;height:462px;background:#1a2a34;"></div><div style="position:absolute;left:448px;top:129px;width:2px;height:55px;background:#1a2a34;"></div><div style="position:absolute;left:448px;top:206px;width:2px;height:55px;background:#1a2a34;"></div><div style="position:absolute;left:448px;top:283px;width:2px;height:55px;background:#1a2a34;"></div><div style="position:absolute;left:448px;top:360px;width:2px;height:55px;background:#1a2a34;"></div><div style="position:absolute;left:448px;top:437px;width:2px;height:55px;background:#1a2a34;"></div><div style="position:absolute;left:448px;top:514px;width:2px;height:55px;background:#1a2a34;"></div><div style="position:absolute;left:457px;top:140px;width:2px;height:22px;background:#1a2a34;"></div><div style="position:absolute;left:457px;top:217px;width:2px;height:22px;background:#1a2a34;"></div><div style="position:absolute;left:457px;top:294px;width:2px;height:22px;background:#1a2a34;"></div><div style="position:absolute;left:457px;top:371px;width:2px;height:22px;background:#1a2a34;"></div><div style="position:absolute;left:457px;top:448px;width:2px;height:22px;background:#1a2a34;"></div><div style="position:absolute;left:457px;top:525px;width:2px;height:22px;background:#1a2a34;"></div><div style="position:absolute;left:422.9px;top:91.71px;font-family:'Liberation Mono',monospace;font-size:8.6px;line-height:0;color:#979fa5;white-space:pre;transform:scaleX(0.8526);transform-origin:0 0;-webkit-text-stroke:0.2px currentColor"><span style="color:#979fa5">{</span></div><div style="position:absolute;left:431.7px;top:102.71px;font-family:'Liberation Mono',monospace;font-size:8.6px;line-height:0;color:#979fa5;white-space:pre;transform:scaleX(0.8526);transform-origin:0 0;-webkit-text-stroke:0.2px currentColor"><span style="color:#1ec48f">"data"</span><span style="color:#979fa5">: {</span></div><div style="position:absolute;left:440.5px;top:113.71px;font-family:'Liberation Mono',monospace;font-size:8.6px;line-height:0;color:#979fa5;white-space:pre;transform:scaleX(0.8526);transform-origin:0 0;-webkit-text-stroke:0.2px currentColor"><span style="color:#1ec48f">"posts"</span><span style="color:#979fa5">: [</span></div><div style="position:absolute;left:449.29999999999995px;top:124.71px;font-family:'Liberation Mono',monospace;font-size:8.6px;line-height:0;color:#979fa5;white-space:pre;transform:scaleX(0.8526);transform-origin:0 0;-webkit-text-stroke:0.2px currentColor"><span style="color:#979fa5">{</span></div><div style="position:absolute;left:458.09999999999997px;top:135.71px;font-family:'Liberation Mono',monospace;font-size:8.6px;line-height:0;color:#979fa5;white-space:pre;transform:scaleX(0.8526);transform-origin:0 0;-webkit-text-stroke:0.2px currentColor"><span style="color:#1ec48f">"author"</span><span style="color:#979fa5">: {</span></div><div style="position:absolute;left:466.9px;top:146.71px;font-family:'Liberation Mono',monospace;font-size:8.6px;line-height:0;color:#979fa5;white-space:pre;transform:scaleX(0.8526);transform-origin:0 0;-webkit-text-stroke:0.2px currentColor"><span style="color:#1ec48f">"email"</span><span style="color:#979fa5">: </span><span style="color:#d6a88a">"jwrista1@tiny.cc"</span><span style="color:#979fa5">,</span></div><div style="position:absolute;left:466.9px;top:157.71px;font-family:'Liberation Mono',monospace;font-size:8.6px;line-height:0;color:#979fa5;white-space:pre;transform:scaleX(0.8526);transform-origin:0 0;-webkit-text-stroke:0.2px currentColor"><span style="color:#1ec48f">"name"</span><span style="color:#979fa5">: </span><span style="color:#d6a88a">"Jeff Wrist"</span></div><div style="position:absolute;left:458.09999999999997px;top:168.71px;font-family:'Liberation Mono',monospace;font-size:8.6px;line-height:0;color:#979fa5;white-space:pre;transform:scaleX(0.8526);transform-origin:0 0;-webkit-text-stroke:0.2px currentColor"><span style="color:#979fa5">},</span></div><div style="position:absolute;left:458.09999999999997px;top:179.71px;font-family:'Liberation Mono',monospace;font-size:8.6px;line-height:0;color:#979fa5;white-space:pre;transform:scaleX(0.8526);transform-origin:0 0;-webkit-text-stroke:0.2px currentColor"><span style="color:#1ec48f">"title"</span><span style="color:#979fa5">: </span><span style="color:#d6a88a">"Ameliorated interactive policy"</span></div><div style="position:absolute;left:449.29999999999995px;top:190.71px;font-family:'Liberation Mono',monospace;font-size:8.6px;line-height:0;color:#979fa5;white-space:pre;transform:scaleX(0.8526);transform-origin:0 0;-webkit-text-stroke:0.2px currentColor"><span style="color:#979fa5">},</span></div><div style="position:absolute;left:449.29999999999995px;top:201.71px;font-family:'Liberation Mono',monospace;font-size:8.6px;line-height:0;color:#979fa5;white-space:pre;transform:scaleX(0.8526);transform-origin:0 0;-webkit-text-stroke:0.2px currentColor"><span style="color:#979fa5">{</span></div><div style="position:absolute;left:458.09999999999997px;top:212.71px;font-family:'Liberation Mono',monospace;font-size:8.6px;line-height:0;color:#979fa5;white-space:pre;transform:scaleX(0.8526);transform-origin:0 0;-webkit-text-stroke:0.2px currentColor"><span style="color:#1ec48f">"author"</span><span style="color:#979fa5">: {</span></div><div style="position:absolute;left:466.9px;top:223.71px;font-family:'Liberation Mono',monospace;font-size:8.6px;line-height:0;color:#979fa5;white-space:pre;transform:scaleX(0.8526);transform-origin:0 0;-webkit-text-stroke:0.2px currentColor"><span style="color:#1ec48f">"email"</span><span style="color:#979fa5">: </span><span style="color:#d6a88a">"ghagwooda6@webnode.com"</span><span style="color:#979fa5">,</span></div><div style="position:absolute;left:466.9px;top:234.71px;font-family:'Liberation Mono',monospace;font-size:8.6px;line-height:0;color:#979fa5;white-space:pre;transform:scaleX(0.8526);transform-origin:0 0;-webkit-text-stroke:0.2px currentColor"><span style="color:#1ec48f">"name"</span><span style="color:#979fa5">: </span><span style="color:#d6a88a">"Giordano Hagwood"</span></div><div style="position:absolute;left:458.09999999999997px;top:245.71px;font-family:'Liberation Mono',monospace;font-size:8.6px;line-height:0;color:#979fa5;white-space:pre;transform:scaleX(0.8526);transform-origin:0 0;-webkit-text-stroke:0.2px currentColor"><span style="color:#979fa5">},</span></div><div style="position:absolute;left:458.09999999999997px;top:256.71px;font-family:'Liberation Mono',monospace;font-size:8.6px;line-height:0;color:#979fa5;white-space:pre;transform:scaleX(0.8526);transform-origin:0 0;-webkit-text-stroke:0.2px currentColor"><span style="color:#1ec48f">"title"</span><span style="color:#979fa5">: </span><span style="color:#d6a88a">"Open-source leading edge focus group"</span></div><div style="position:absolute;left:449.29999999999995px;top:267.71px;font-family:'Liberation Mono',monospace;font-size:8.6px;line-height:0;color:#979fa5;white-space:pre;transform:scaleX(0.8526);transform-origin:0 0;-webkit-text-stroke:0.2px currentColor"><span style="color:#979fa5">},</span></div><div style="position:absolute;left:449.29999999999995px;top:278.71px;font-family:'Liberation Mono',monospace;font-size:8.6px;line-height:0;color:#979fa5;white-space:pre;transform:scaleX(0.8526);transform-origin:0 0;-webkit-text-stroke:0.2px currentColor"><span style="color:#979fa5">{</span></div><div style="position:absolute;left:458.09999999999997px;top:289.71px;font-family:'Liberation Mono',monospace;font-size:8.6px;line-height:0;color:#979fa5;white-space:pre;transform:scaleX(0.8526);transform-origin:0 0;-webkit-text-stroke:0.2px currentColor"><span style="color:#1ec48f">"author"</span><span style="color:#979fa5">: {</span></div><div style="position:absolute;left:466.9px;top:300.71px;font-family:'Liberation Mono',monospace;font-size:8.6px;line-height:0;color:#979fa5;white-space:pre;transform:scaleX(0.8526);transform-origin:0 0;-webkit-text-stroke:0.2px currentColor"><span style="color:#1ec48f">"email"</span><span style="color:#979fa5">: </span><span style="color:#d6a88a">"ljerrimbj@purevolume.com"</span><span style="color:#979fa5">,</span></div><div style="position:absolute;left:466.9px;top:311.71px;font-family:'Liberation Mono',monospace;font-size:8.6px;line-height:0;color:#979fa5;white-space:pre;transform:scaleX(0.8526);transform-origin:0 0;-webkit-text-stroke:0.2px currentColor"><span style="color:#1ec48f">"name"</span><span style="color:#979fa5">: </span><span style="color:#d6a88a">"Lazare Jerrim"</span></div><div style="position:absolute;left:458.09999999999997px;top:322.71px;font-family:'Liberation Mono',monospace;font-size:8.6px;line-height:0;color:#979fa5;white-space:pre;transform:scaleX(0.8526);transform-origin:0 0;-webkit-text-stroke:0.2px currentColor"><span style="color:#979fa5">},</span></div><div style="position:absolute;left:458.09999999999997px;top:333.71px;font-family:'Liberation Mono',monospace;font-size:8.6px;line-height:0;color:#979fa5;white-space:pre;transform:scaleX(0.8526);transform-origin:0 0;-webkit-text-stroke:0.2px currentColor"><span style="color:#1ec48f">"title"</span><span style="color:#979fa5">: </span><span style="color:#d6a88a">"Decentralized well-modulated attitude"</span></div><div style="position:absolute;left:449.29999999999995px;top:344.71px;font-family:'Liberation Mono',monospace;font-size:8.6px;line-height:0;color:#979fa5;white-space:pre;transform:scaleX(0.8526);transform-origin:0 0;-webkit-text-stroke:0.2px currentColor"><span style="color:#979fa5">},</span></div><div style="position:absolute;left:449.29999999999995px;top:355.71px;font-family:'Liberation Mono',monospace;font-size:8.6px;line-height:0;color:#979fa5;white-space:pre;transform:scaleX(0.8526);transform-origin:0 0;-webkit-text-stroke:0.2px currentColor"><span style="color:#979fa5">{</span></div><div style="position:absolute;left:458.09999999999997px;top:366.71px;font-family:'Liberation Mono',monospace;font-size:8.6px;line-height:0;color:#979fa5;white-space:pre;transform:scaleX(0.8526);transform-origin:0 0;-webkit-text-stroke:0.2px currentColor"><span style="color:#1ec48f">"author"</span><span style="color:#979fa5">: {</span></div><div style="position:absolute;left:466.9px;top:377.71px;font-family:'Liberation Mono',monospace;font-size:8.6px;line-height:0;color:#979fa5;white-space:pre;transform:scaleX(0.8526);transform-origin:0 0;-webkit-text-stroke:0.2px currentColor"><span style="color:#1ec48f">"email"</span><span style="color:#979fa5">: </span><span style="color:#d6a88a">"gbreslin6b@wired.com"</span><span style="color:#979fa5">,</span></div><div style="position:absolute;left:466.9px;top:388.71px;font-family:'Liberation Mono',monospace;font-size:8.6px;line-height:0;color:#979fa5;white-space:pre;transform:scaleX(0.8526);transform-origin:0 0;-webkit-text-stroke:0.2px currentColor"><span style="color:#1ec48f">"name"</span><span style="color:#979fa5">: </span><span style="color:#d6a88a">"Gabriele Breslin"</span></div><div style="position:absolute;left:458.09999999999997px;top:399.71px;font-family:'Liberation Mono',monospace;font-size:8.6px;line-height:0;color:#979fa5;white-space:pre;transform:scaleX(0.8526);transform-origin:0 0;-webkit-text-stroke:0.2px currentColor"><span style="color:#979fa5">},</span></div><div style="position:absolute;left:458.09999999999997px;top:410.71px;font-family:'Liberation Mono',monospace;font-size:8.6px;line-height:0;color:#979fa5;white-space:pre;transform:scaleX(0.8526);transform-origin:0 0;-webkit-text-stroke:0.2px currentColor"><span style="color:#1ec48f">"title"</span><span style="color:#979fa5">: </span><span style="color:#d6a88a">"Extended explicit collaboration"</span></div><div style="position:absolute;left:449.29999999999995px;top:421.71px;font-family:'Liberation Mono',monospace;font-size:8.6px;line-height:0;color:#979fa5;white-space:pre;transform:scaleX(0.8526);transform-origin:0 0;-webkit-text-stroke:0.2px currentColor"><span style="color:#979fa5">},</span></div><div style="position:absolute;left:449.29999999999995px;top:432.71px;font-family:'Liberation Mono',monospace;font-size:8.6px;line-height:0;color:#979fa5;white-space:pre;transform:scaleX(0.8526);transform-origin:0 0;-webkit-text-stroke:0.2px currentColor"><span style="color:#979fa5">{</span></div><div style="position:absolute;left:458.09999999999997px;top:443.71px;font-family:'Liberation Mono',monospace;font-size:8.6px;line-height:0;color:#979fa5;white-space:pre;transform:scaleX(0.8526);transform-origin:0 0;-webkit-text-stroke:0.2px currentColor"><span style="color:#1ec48f">"author"</span><span style="color:#979fa5">: {</span></div><div style="position:absolute;left:466.9px;top:454.71px;font-family:'Liberation Mono',monospace;font-size:8.6px;line-height:0;color:#979fa5;white-space:pre;transform:scaleX(0.8526);transform-origin:0 0;-webkit-text-stroke:0.2px currentColor"><span style="color:#1ec48f">"email"</span><span style="color:#979fa5">: </span><span style="color:#d6a88a">"nlambourn63@youku.com"</span><span style="color:#979fa5">,</span></div><div style="position:absolute;left:466.9px;top:465.71px;font-family:'Liberation Mono',monospace;font-size:8.6px;line-height:0;color:#979fa5;white-space:pre;transform:scaleX(0.8526);transform-origin:0 0;-webkit-text-stroke:0.2px currentColor"><span style="color:#1ec48f">"name"</span><span style="color:#979fa5">: </span><span style="color:#d6a88a">"Nicholle Lambourn"</span></div><div style="position:absolute;left:458.09999999999997px;top:476.71px;font-family:'Liberation Mono',monospace;font-size:8.6px;line-height:0;color:#979fa5;white-space:pre;transform:scaleX(0.8526);transform-origin:0 0;-webkit-text-stroke:0.2px currentColor"><span style="color:#979fa5">},</span></div><div style="position:absolute;left:458.09999999999997px;top:487.71px;font-family:'Liberation Mono',monospace;font-size:8.6px;line-height:0;color:#979fa5;white-space:pre;transform:scaleX(0.8526);transform-origin:0 0;-webkit-text-stroke:0.2px currentColor"><span style="color:#1ec48f">"title"</span><span style="color:#979fa5">: </span><span style="color:#d6a88a">"Fully-configurable leading edge moderator"</span></div><div style="position:absolute;left:449.29999999999995px;top:498.71px;font-family:'Liberation Mono',monospace;font-size:8.6px;line-height:0;color:#979fa5;white-space:pre;transform:scaleX(0.8526);transform-origin:0 0;-webkit-text-stroke:0.2px currentColor"><span style="color:#979fa5">},</span></div><div style="position:absolute;left:449.29999999999995px;top:509.71px;font-family:'Liberation Mono',monospace;font-size:8.6px;line-height:0;color:#979fa5;white-space:pre;transform:scaleX(0.8526);transform-origin:0 0;-webkit-text-stroke:0.2px currentColor"><span style="color:#979fa5">{</span></div><div style="position:absolute;left:458.09999999999997px;top:520.71px;font-family:'Liberation Mono',monospace;font-size:8.6px;line-height:0;color:#979fa5;white-space:pre;transform:scaleX(0.8526);transform-origin:0 0;-webkit-text-stroke:0.2px currentColor"><span style="color:#1ec48f">"author"</span><span style="color:#979fa5">: {</span></div><div style="position:absolute;left:466.9px;top:531.71px;font-family:'Liberation Mono',monospace;font-size:8.6px;line-height:0;color:#979fa5;white-space:pre;transform:scaleX(0.8526);transform-origin:0 0;-webkit-text-stroke:0.2px currentColor"><span style="color:#1ec48f">"email"</span><span style="color:#979fa5">: </span><span style="color:#d6a88a">"mbeer3x@simplemachines.org"</span><span style="color:#979fa5">,</span></div><div style="position:absolute;left:466.9px;top:542.71px;font-family:'Liberation Mono',monospace;font-size:8.6px;line-height:0;color:#979fa5;white-space:pre;transform:scaleX(0.8526);transform-origin:0 0;-webkit-text-stroke:0.2px currentColor"><span style="color:#1ec48f">"name"</span><span style="color:#979fa5">: </span><span style="color:#d6a88a">"Merwin Beer"</span></div><div style="position:absolute;left:458.09999999999997px;top:553.71px;font-family:'Liberation Mono',monospace;font-size:8.6px;line-height:0;color:#979fa5;white-space:pre;transform:scaleX(0.8526);transform-origin:0 0;-webkit-text-stroke:0.2px currentColor"><span style="color:#979fa5">},</span></div><div style="position:absolute;left:458.09999999999997px;top:564.71px;font-family:'Liberation Mono',monospace;font-size:8.6px;line-height:0;color:#979fa5;white-space:pre;transform:scaleX(0.8526);transform-origin:0 0;-webkit-text-stroke:0.2px currentColor"><span style="color:#1ec48f">"title"</span><span style="color:#979fa5">: </span><span style="color:#d6a88a">"Customer-focused hybrid interface"</span></div><div style="position:absolute;left:449.29999999999995px;top:575.71px;font-family:'Liberation Mono',monospace;font-size:8.6px;line-height:0;color:#979fa5;white-space:pre;transform:scaleX(0.8526);transform-origin:0 0;-webkit-text-stroke:0.2px currentColor"><span style="color:#979fa5">}</span></div><div style="position:absolute;left:440.5px;top:586.71px;font-family:'Liberation Mono',monospace;font-size:8.6px;line-height:0;color:#979fa5;white-space:pre;transform:scaleX(0.8526);transform-origin:0 0;-webkit-text-stroke:0.2px currentColor"><span style="color:#979fa5">]</span></div><div style="position:absolute;left:431.7px;top:597.71px;font-family:'Liberation Mono',monospace;font-size:8.6px;line-height:0;color:#979fa5;white-space:pre;transform:scaleX(0.8526);transform-origin:0 0;-webkit-text-stroke:0.2px currentColor"><span style="color:#979fa5">}</span></div><div style="position:absolute;left:422.9px;top:608.71px;font-family:'Liberation Mono',monospace;font-size:8.6px;line-height:0;color:#979fa5;white-space:pre;transform:scaleX(0.8526);transform-origin:0 0;-webkit-text-stroke:0.2px currentColor"><span style="color:#979fa5">}</span></div>
</body></html>
